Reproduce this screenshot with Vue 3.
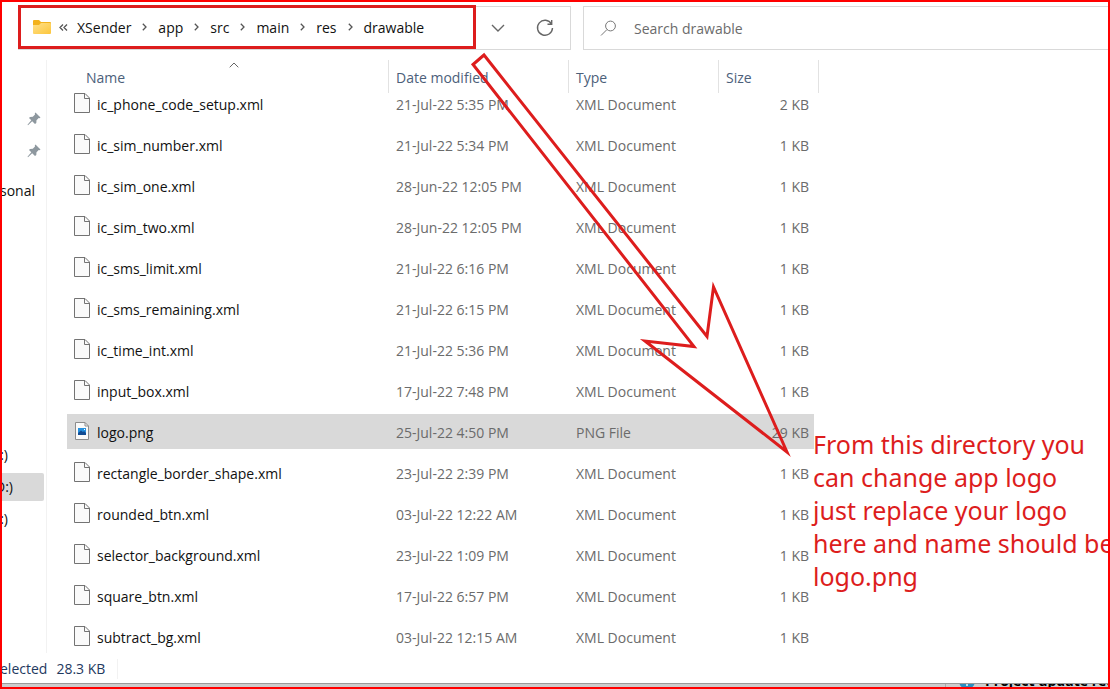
<script setup>
const crumbs = ['XSender', 'app', 'src', 'main', 'res', 'drawable']

const columns = [
  { key: 'name', label: 'Name' },
  { key: 'date', label: 'Date modified' },
  { key: 'type', label: 'Type' },
  { key: 'size', label: 'Size' },
]

const files = [
  { name: 'ic_phone_code_setup.xml', date: '21-Jul-22 5:35 PM', type: 'XML Document', size: '2 KB' },
  { name: 'ic_sim_number.xml', date: '21-Jul-22 5:34 PM', type: 'XML Document', size: '1 KB' },
  { name: 'ic_sim_one.xml', date: '28-Jun-22 12:05 PM', type: 'XML Document', size: '1 KB' },
  { name: 'ic_sim_two.xml', date: '28-Jun-22 12:05 PM', type: 'XML Document', size: '1 KB' },
  { name: 'ic_sms_limit.xml', date: '21-Jul-22 6:16 PM', type: 'XML Document', size: '1 KB' },
  { name: 'ic_sms_remaining.xml', date: '21-Jul-22 6:15 PM', type: 'XML Document', size: '1 KB' },
  { name: 'ic_time_int.xml', date: '21-Jul-22 5:36 PM', type: 'XML Document', size: '1 KB' },
  { name: 'input_box.xml', date: '17-Jul-22 7:48 PM', type: 'XML Document', size: '1 KB' },
  { name: 'logo.png', date: '25-Jul-22 4:50 PM', type: 'PNG File', size: '29 KB', selected: true },
  { name: 'rectangle_border_shape.xml', date: '23-Jul-22 2:39 PM', type: 'XML Document', size: '1 KB' },
  { name: 'rounded_btn.xml', date: '03-Jul-22 12:22 AM', type: 'XML Document', size: '1 KB' },
  { name: 'selector_background.xml', date: '23-Jul-22 1:09 PM', type: 'XML Document', size: '1 KB' },
  { name: 'square_btn.xml', date: '17-Jul-22 6:57 PM', type: 'XML Document', size: '1 KB' },
  { name: 'subtract_bg.xml', date: '03-Jul-22 12:15 AM', type: 'XML Document', size: '1 KB' },
]

const note = [
  'From this directory you',
  'can change app logo',
  'just replace your logo',
  'here and name should be',
  'logo.png',
]
</script>

<template>
  <div class="window">
    <header class="toolbar">
      <div class="address">
        <nav class="path" aria-label="Path">
          <svg class="folder" width="18" height="14" viewBox="0 0 18 14" aria-hidden="true">
            <defs>
              <linearGradient id="folderFill" x1="0" y1="0" x2="1" y2="1">
                <stop offset="0" stop-color="#ffe08a" />
                <stop offset="1" stop-color="#fcc63c" />
              </linearGradient>
            </defs>
            <path d="M0 1Q0 0 1 0H6L8 2H17Q18 2 18 3V8H0Z" fill="#f3b21c" />
            <path d="M0 5H6L8 3H17Q18 3 18 4V13Q18 14 17 14H1Q0 14 0 13Z" fill="url(#folderFill)" />
          </svg>
          <button class="more" type="button" aria-label="Parent folders">
            <svg width="9" height="7" viewBox="0 0 9 7"><path d="M4 .5L1 3.500L4 6.500M8 .5L5 3.500L8 6.500" /></svg>
          </button>
          <template v-for="(crumb, i) in crumbs" :key="crumb">
            <svg v-if="i" class="sep" width="5" height="8" viewBox="0 0 5 8" aria-hidden="true"><path d="M.8 .8L4 4L.8 7.200" /></svg>
            <a href="#" class="crumb">{{ crumb }}</a>
          </template>
        </nav>
        <button class="tool drop" type="button" aria-label="Previous locations">
          <svg width="14" height="8" viewBox="0 0 14 8"><path d="M1 1L7 7L13 1" /></svg>
        </button>
        <button class="tool" type="button" aria-label="Refresh">
          <svg width="18" height="18" viewBox="0 0 18 18"><path d="M15.500 5A7.500 7.500 0 1 0 16.500 9M15.700 1V5.200H11.500" /></svg>
        </button>
      </div>
      <label class="search">
        <svg width="17" height="17" viewBox="0 0 17 17" aria-hidden="true"><circle cx="10.500" cy="6" r="4.900" /><path d="M7 9.500L1 15.500" /></svg>
        <input type="search" placeholder="Search drawable" aria-label="Search drawable" />
      </label>
    </header>

    <main class="body">
      <aside class="sidebar">
        <div v-for="n in 2" :key="n" class="side-item pinned">
          <svg width="14" height="14" viewBox="0 0 14 14" aria-hidden="true">
            <path d="M8.500 .5L13.500 5.500L12.500 6.200L11.700 6L9.500 8.300L9.300 11L8 12L5.200 9.200L1 13.200L.5 12.700L4.300 8.300L2 6L3 4.900L5.800 4.700L8 2.500L7.800 1.200Z" />
          </svg>
        </div>
        <div class="side-item personal">sonal</div>
        <div class="side-item drive first">:)</div>
        <div class="side-item drive current">D:)</div>
        <div class="side-item drive">:)</div>
      </aside>

      <table class="files">
        <colgroup>
          <col class="c-name" /><col class="c-date" /><col class="c-type" /><col class="c-size" />
        </colgroup>
        <thead>
          <tr>
            <th v-for="col in columns" :key="col.key" scope="col">
              <div class="head" :class="col.key">
                {{ col.label }}
                <svg v-if="col.key === 'name'" class="sort" width="10" height="6" viewBox="0 0 10 6" aria-hidden="true"><path d="M.7 5.300L5 1L9.300 5.300" /></svg>
              </div>
            </th>
          </tr>
        </thead>
        <tbody>
          <tr v-for="file in files" :key="file.name" :class="{ selected: file.selected }">
            <td>
              <div class="name-cell">
                <svg v-if="file.selected" class="icon" width="16" height="20" viewBox="0 0 16 20" aria-hidden="true">
                  <path d="M1.500 1.500H11L14.500 5V18.500H1.500Z" fill="#fafafa" stroke="#8c8c8c" />
                  <path d="M11 1.500V5H14.500" fill="none" stroke="#8c8c8c" />
                  <rect x="4" y="7" width="8" height="7" fill="#2590df" />
                  <path d="M4 12L7 9.500L9 11L10 10L12 12V14H4Z" fill="#134c93" />
                  <rect x="10" y="8" width="1" height="1" fill="#fff" />
                </svg>
                <svg v-else class="icon" width="16" height="20" viewBox="0 0 16 20" aria-hidden="true">
                  <path d="M.5 .5H11L15.500 5V19.500H.5Z" fill="#fafafa" stroke="#737373" />
                  <path d="M10.500 .5V5.500H15.500" fill="none" stroke="#737373" />
                </svg>
                <span>{{ file.name }}</span>
              </div>
            </td>
            <td>{{ file.date }}</td>
            <td>{{ file.type }}</td>
            <td class="size">{{ file.size }}</td>
          </tr>
        </tbody>
      </table>
    </main>

    <footer class="status"><span>elected</span><span class="total">28.3 KB</span></footer>

    <div class="behind">
      <div class="behind-panel">
        <svg width="16" height="16" viewBox="0 0 16 16" aria-hidden="true"><circle cx="8" cy="8" r="8" fill="#2b8fc0" /><path d="M7 9H9V13H7Z" fill="#b8dcea" /></svg>
        <span>Project update rec</span>
      </div>
    </div>

    <svg class="arrow" width="1110" height="689" viewBox="0 0 1110 689" aria-hidden="true">
      <path d="M484 55L473 64.500L694 346.500L645 341L787 452L713.500 287L707 336.500Z" />
    </svg>
    <p class="note"><span v-for="line in note" :key="line">{{ line }}</span></p>
    <div class="frame"></div>
  </div>
</template>

<style>
html,
body {
  margin: 0;
  background: #fff;
}
</style>

<style scoped>
.window {
  position: relative;
  display: flex;
  flex-direction: column;
  min-height: 100vh;
  box-sizing: border-box;
  overflow: hidden;
  background: #fff;
  color: #111;
  font: 14px/20px 'Open Sans', 'Noto Sans', sans-serif;
}
svg {
  display: block;
  flex: none;
}
button {
  display: flex;
  align-items: center;
  justify-content: center;
  padding: 0;
  border: 0;
  background: none;
}
.toolbar {
  display: flex;
  gap: 12px;
  padding: 6px 0 0 18px;
}
.address {
  display: flex;
  box-sizing: border-box;
  width: 553px;
  height: 44px;
  border: 1px solid #d9d9d9;
  border-left: 0;
}
.path {
  display: flex;
  align-items: center;
  box-sizing: border-box;
  width: 459px;
  height: 44px;
  margin-top: -2px;
  padding-left: 12px;
  border: 3px solid #dd1d1d;
}
.more {
  width: 9px;
  margin: 0 9px 0 8px;
}
.more path,
.sep path {
  fill: none;
  stroke: #555;
  stroke-width: 1.3;
}
.sep {
  margin: 0 11px;
}
.crumb {
  padding-top: 1px;
  color: #111;
  text-decoration: none;
}
.tool {
  width: 50px;
}
.drop {
  width: 44px;
}
.tool path {
  fill: none;
  stroke: #666;
  stroke-width: 1.4;
}
.search {
  display: flex;
  flex: 1;
  align-items: center;
  gap: 17px;
  box-sizing: border-box;
  height: 44px;
  padding-left: 16px;
  border: 1px solid #d9d9d9;
  border-right: 0;
}
.search svg {
  fill: none;
  stroke: #777;
}
.search input {
  flex: 1;
  min-width: 0;
  padding: 2px 0 0;
  border: 0;
  outline: 0;
  background: none;
  color: #666;
  font: inherit;
}
.search input::placeholder {
  color: #6b6b6b;
  opacity: 1;
}
.body {
  display: flex;
  align-items: flex-start;
  gap: 20px;
  padding-top: 10px;
}
.sidebar {
  box-sizing: border-box;
  width: 47px;
  height: 593px;
  padding: 45px 2px 0 0;
  border-right: 1px solid #f2f2f2;
}
.side-item {
  display: flex;
  align-items: center;
  justify-content: flex-end;
  box-sizing: border-box;
  height: 28px;
  margin-bottom: 4px;
}
.pinned {
  padding-right: 3px;
}
.pinned svg {
  fill: #8e989f;
}
.personal {
  margin-top: 12px;
  padding-right: 9px;
}
.drive {
  padding-right: 36px;
}
.first {
  margin-top: 236px;
}
.current {
  padding-right: 31px;
  border-radius: 0 2px 2px 0;
  background: #d9d9d9;
}
.files {
  width: 747px;
  table-layout: fixed;
  border-spacing: 0;
}
.c-name {
  width: 322px;
}
.c-date {
  width: 180px;
}
.c-type {
  width: 150px;
}
th {
  height: 23px;
  padding: 0;
  font-weight: 400;
  text-align: left;
  vertical-align: top;
}
.head {
  position: relative;
  box-sizing: border-box;
  height: 33px;
  margin-bottom: -10px;
  padding: 8px 0 0 7px;
  border-right: 1px solid #e2e2e2;
  color: #4c607a;
}
.head.name {
  padding-left: 19px;
}
.head.size {
  margin-right: -5px;
}
.sort {
  position: absolute;
  top: 2px;
  left: 162px;
}
.sort path {
  fill: none;
  stroke: #666;
}
td {
  box-sizing: border-box;
  height: 41px;
  padding: 2px 0 0 7px;
  border: solid transparent;
  border-width: 3px 0;
  background-clip: padding-box;
  color: #6b6b6b;
}
td.size {
  padding: 2px 5px 0 0;
  text-align: right;
}
.selected td {
  background-color: #d9d9d9;
}
.selected td:first-child {
  border-radius: 2px 0 0 2px;
}
.name-cell {
  display: flex;
  gap: 7px;
  color: #111;
}
.icon {
  margin-top: -2px;
}
.status {
  display: flex;
  gap: 9px;
  box-sizing: border-box;
  height: 26px;
  padding: 2px 0 4px;
  color: #1f3a5f;
}
.total {
  height: 20px;
  padding-right: 12px;
  border-right: 1px solid #f2f2f2;
}
.behind {
  display: flex;
  justify-content: flex-end;
  height: 6px;
  overflow: hidden;
  box-sizing: border-box;
  border-top: 1px solid #999;
  background: #cccccc;
}
.behind-panel {
  display: flex;
  align-items: center;
  gap: 10px;
  box-sizing: border-box;
  width: 165px;
  height: 20px;
  margin-top: -13px;
  padding-left: 13px;
  border-left: 1px solid #aaa;
  color: #000;
  font-weight: 700;
  white-space: nowrap;
}
.arrow {
  position: absolute;
  top: 0;
  left: 0;
  pointer-events: none;
}
.arrow path {
  fill: none;
  stroke: #dd1d1d;
  stroke-width: 3;
  stroke-miterlimit: 10;
}
.note {
  position: absolute;
  top: 428px;
  left: 813px;
  margin: 0;
  color: #dd1d1d;
  font-family: 'Noto Sans', 'Open Sans', sans-serif;
  font-size: 25px;
  line-height: 33px;
  white-space: nowrap;
}
.note span {
  display: block;
}
.frame {
  position: absolute;
  inset: 0;
  border: 2px solid #f00;
  pointer-events: none;
}
</style>
